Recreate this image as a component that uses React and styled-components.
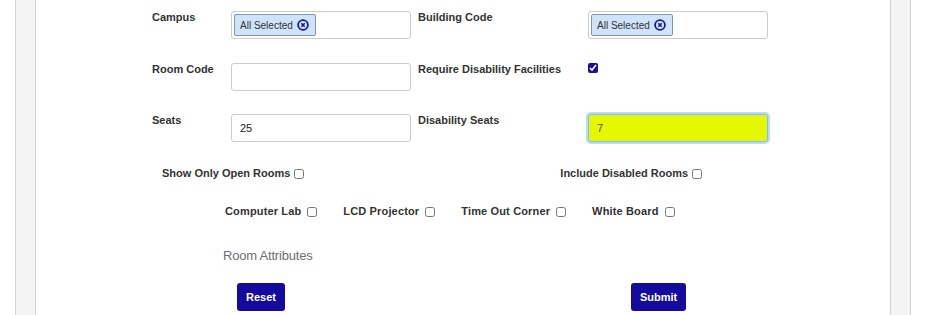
import React from "react";
import styled, { createGlobalStyle } from "styled-components";

const GlobalStyle = createGlobalStyle`
  body {
    margin: 0;
    background: #ffffff;
    font-family: "Liberation Sans", Arial, sans-serif;
  }
`;

const Page = styled.div`
  padding: 0 15px;
  height: 315px;
  overflow: hidden;
`;

const Outer = styled.div`
  width: 856px;
  height: 100%;
  padding: 0 19px;
  background: #f4f4f4;
  border-left: 1px solid #d2d2d2;
  border-right: 1px solid #d2d2d2;
`;

const Panel = styled.div`
  height: 100%;
  background: #ffffff;
  border-left: 1px solid #d2d2d2;
  border-right: 1px solid #d2d2d2;
  padding-top: 11px;
  box-sizing: border-box;
`;

const FormGrid = styled.div`
  display: grid;
  grid-template-columns: 79px 187px 170px 180px;
  grid-auto-rows: 28px;
  row-gap: 23.5px;
  padding-left: 116px;
`;

const Label = styled.label`
  font-size: 11px;
  line-height: 13px;
  font-weight: bold;
  color: #333333;
  align-self: start;
`;

const Field = styled.div`
  width: 180px;
  height: 28px;
  box-sizing: border-box;
  border: 1px solid #cccccc;
  border-radius: 3px;
  padding: 2px;
  display: flex;
  align-items: flex-start;
`;

const Chip = styled.span`
  display: inline-flex;
  align-items: center;
  gap: 4px;
  height: 22px;
  box-sizing: border-box;
  padding: 0 6px 0 5px;
  background: #cfe4fb;
  border: 1px solid #8496ad;
  border-radius: 2px;
  font-size: 10px;
  color: #333333;
`;

const TextInput = styled.input`
  width: 180px;
  height: 28px;
  box-sizing: border-box;
  border: 1px solid ${({ $focused }) => ($focused ? "#80bdff" : "#cccccc")};
  border-radius: 3px;
  padding: 0 8px;
  font-family: "Liberation Sans", Arial, sans-serif;
  font-size: 11px;
  color: ${({ $focused }) => ($focused ? "#5b4f8a" : "#222222")};
  background: ${({ $focused }) => ($focused ? "#e5f800" : "#ffffff")};
  box-shadow: ${({ $focused }) =>
    $focused ? "0 0 0 2px rgba(0, 123, 255, 0.28)" : "none"};
  outline: none;
`;

const Check = styled.input.attrs({ type: "checkbox" })`
  width: 10px;
  height: 10px;
  margin: 0;
  accent-color: #1d0f9a;
`;

const CheckCell = styled.div`
  align-self: start;
  display: flex;
`;

const ToggleRow = styled.div`
  display: flex;
  gap: 256px;
  padding-left: 126px;
  margin-top: 25px;
`;

const AttrRow = styled.div`
  display: flex;
  gap: 26px;
  padding-left: 189px;
  margin-top: 25px;
`;

const CheckLabel = styled.label`
  display: inline-flex;
  align-items: center;
  gap: ${({ $gap }) => $gap}px;
  font-size: 11px;
  line-height: 13px;
  font-weight: bold;
  letter-spacing: ${({ $spread }) => ($spread ? "0.15px" : "0")};
  color: #333333;
`;

const SectionTitle = styled.div`
  padding-left: 187px;
  margin-top: 30px;
  font-size: 13px;
  letter-spacing: -0.2px;
  line-height: 16px;
  color: #6c7077;
`;

const ButtonRow = styled.div`
  display: flex;
  gap: 346px;
  padding-left: 201px;
  margin-top: 19px;
`;

const Button = styled.button`
  height: 28px;
  padding: 0 9px;
  border: none;
  border-radius: 3px;
  background: #150a9e;
  color: #ffffff;
  font-family: "Liberation Sans", Arial, sans-serif;
  font-size: 11px;
  font-weight: bold;
  cursor: pointer;
`;

const ClearIcon = () => (
  <svg width="12" height="12" viewBox="0 0 12 12">
    <circle cx="6" cy="6" r="4.9" fill="none" stroke="#1b1a8c" strokeWidth="1.8" />
    <path d="M4.3 4.3 L7.7 7.7 M7.7 4.3 L4.3 7.7" stroke="#1b1a8c" strokeWidth="1.6" />
  </svg>
);

const AllSelected = () => (
  <Field>
    <Chip>
      All Selected
      <ClearIcon />
    </Chip>
  </Field>
);

const attributes = ["Computer Lab", "LCD Projector", "Time Out Corner", "White Board"];

export default function App() {
  return (
    <>
      <GlobalStyle />
      <Page>
        <Outer>
          <Panel>
            <FormGrid>
              <Label>Campus</Label>
              <AllSelected />
              <Label>Building Code</Label>
              <AllSelected />

              <Label>Room Code</Label>
              <TextInput defaultValue="" />
              <Label>Require Disability Facilities</Label>
              <CheckCell>
                <Check defaultChecked />
              </CheckCell>

              <Label>Seats</Label>
              <TextInput defaultValue="25" />
              <Label>Disability Seats</Label>
              <TextInput $focused defaultValue="7" />
            </FormGrid>

            <ToggleRow>
              <CheckLabel $gap={4}>
                Show Only Open Rooms <Check />
              </CheckLabel>
              <CheckLabel $gap={4}>
                Include Disabled Rooms <Check />
              </CheckLabel>
            </ToggleRow>

            <AttrRow>
              {attributes.map((name) => (
                <CheckLabel key={name} $gap={6} $spread>
                  {name} <Check />
                </CheckLabel>
              ))}
            </AttrRow>

            <SectionTitle>Room Attributes</SectionTitle>

            <ButtonRow>
              <Button>Reset</Button>
              <Button>Submit</Button>
            </ButtonRow>
          </Panel>
        </Outer>
      </Page>
    </>
  );
}
